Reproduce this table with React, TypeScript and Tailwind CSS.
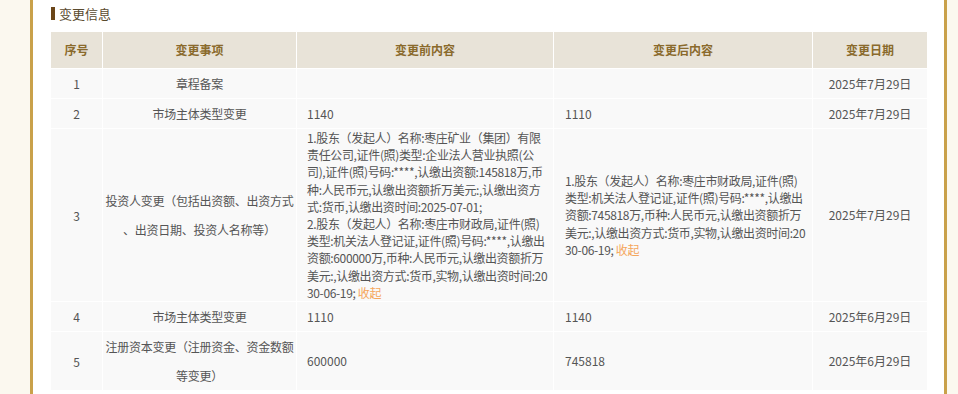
import React from "react";

const before3 = [
  "1.股东（发起人）名称:枣庄矿业（集团）有限",
  "责任公司,证件(照)类型:企业法人营业执照(公",
  "司),证件(照)号码:****,认缴出资额:145818万,币",
  "种:人民币元,认缴出资额折万美元:,认缴出资方",
  "式:货币,认缴出资时间:2025-07-01;",
  "2.股东（发起人）名称:枣庄市财政局,证件(照)",
  "类型:机关法人登记证,证件(照)号码:****,认缴出",
  "资额:600000万,币种:人民币元,认缴出资额折万",
  "美元:,认缴出资方式:货币,实物,认缴出资时间:20",
];
const after3 = [
  "1.股东（发起人）名称:枣庄市财政局,证件(照)",
  "类型:机关法人登记证,证件(照)号码:****,认缴出",
  "资额:745818万,币种:人民币元,认缴出资额折万",
  "美元:,认缴出资方式:货币,实物,认缴出资时间:20",
];

function Lines({ lines }: { lines: string[] }) {
  return (
    <div className="leading-[17.2px] tracking-[-0.35px]">
      {lines.map((l, i) => (
        <div key={i} className="whitespace-nowrap">{l}</div>
      ))}
      <div className="whitespace-nowrap">
        30-06-19; <span className="text-[#f5a65b]">收起</span>
      </div>
    </div>
  );
}

const cell = "bg-[#f9f9f9] flex items-center";

type Row = { n: string; item: React.ReactNode; before: React.ReactNode; after: React.ReactNode; date: string };

const rows: Row[] = [
  { n: "1", item: "章程备案", before: "", after: "", date: "2025年7月29日" },
  { n: "2", item: "市场主体类型变更", before: "1140", after: "1110", date: "2025年7月29日" },
  {
    n: "3",
    item: (
      <>
        <div>投资人变更（包括出资额、出资方式</div>
        <div>、出资日期、投资人名称等）</div>
      </>
    ),
    before: <Lines lines={before3} />,
    after: <Lines lines={after3} />,
    date: "2025年7月29日",
  },
  { n: "4", item: "市场主体类型变更", before: "1110", after: "1140", date: "2025年6月29日" },
  {
    n: "5",
    item: (
      <>
        <div>注册资本变更（注册资金、资金数额</div>
        <div>等变更）</div>
      </>
    ),
    before: "600000",
    after: "745818",
    date: "2025年6月29日",
  },
];

export default function App() {
  return (
    <div
      className="flex h-[394px] w-[958px] overflow-hidden bg-[#fbf8ef] text-[12px] text-[#555555]"
      style={{ fontFamily: '"Noto Sans CJK SC", "Noto Sans", sans-serif' }}
    >
      <div className="w-[30px] shrink-0" />
      <div className="w-[917px] shrink-0 border-x-[3px] border-[#c9a14a] bg-white pl-[18px] pr-[17px]">
        <div className="mb-[5px] flex h-[27px] items-center gap-[4px]">
          <div className="h-[13px] w-[4px] bg-[#6b4619]" />
          <div className="text-[13px] text-[#5a4a2e]">变更信息</div>
        </div>
        <div className="grid grid-cols-[51px_193px_256px_258px_114px] gap-px bg-white">
          {["序号", "变更事项", "变更前内容", "变更后内容", "变更日期"].map((h) => (
            <div
              key={h}
              className="flex h-[36px] items-center justify-center bg-[#e8e3d8] text-[12px] font-semibold text-[#8a6a2c]"
            >
              {h}
            </div>
          ))}
          {rows.map((r) => (
            <React.Fragment key={r.n}>
              <div className={`${cell} min-h-[29px] justify-center leading-[29px]`}>{r.n}</div>
              <div className={`${cell} flex-col justify-center text-center leading-[29px] tracking-[-0.25px]`}>{r.item}</div>
              <div className={`${cell} px-[10px]`}>{r.before}</div>
              <div className={`${cell} px-[11px]`}>{r.after}</div>
              <div className={`${cell} justify-center`}>{r.date}</div>
            </React.Fragment>
          ))}
        </div>
      </div>
      <div className="flex-1" />
    </div>
  );
}
